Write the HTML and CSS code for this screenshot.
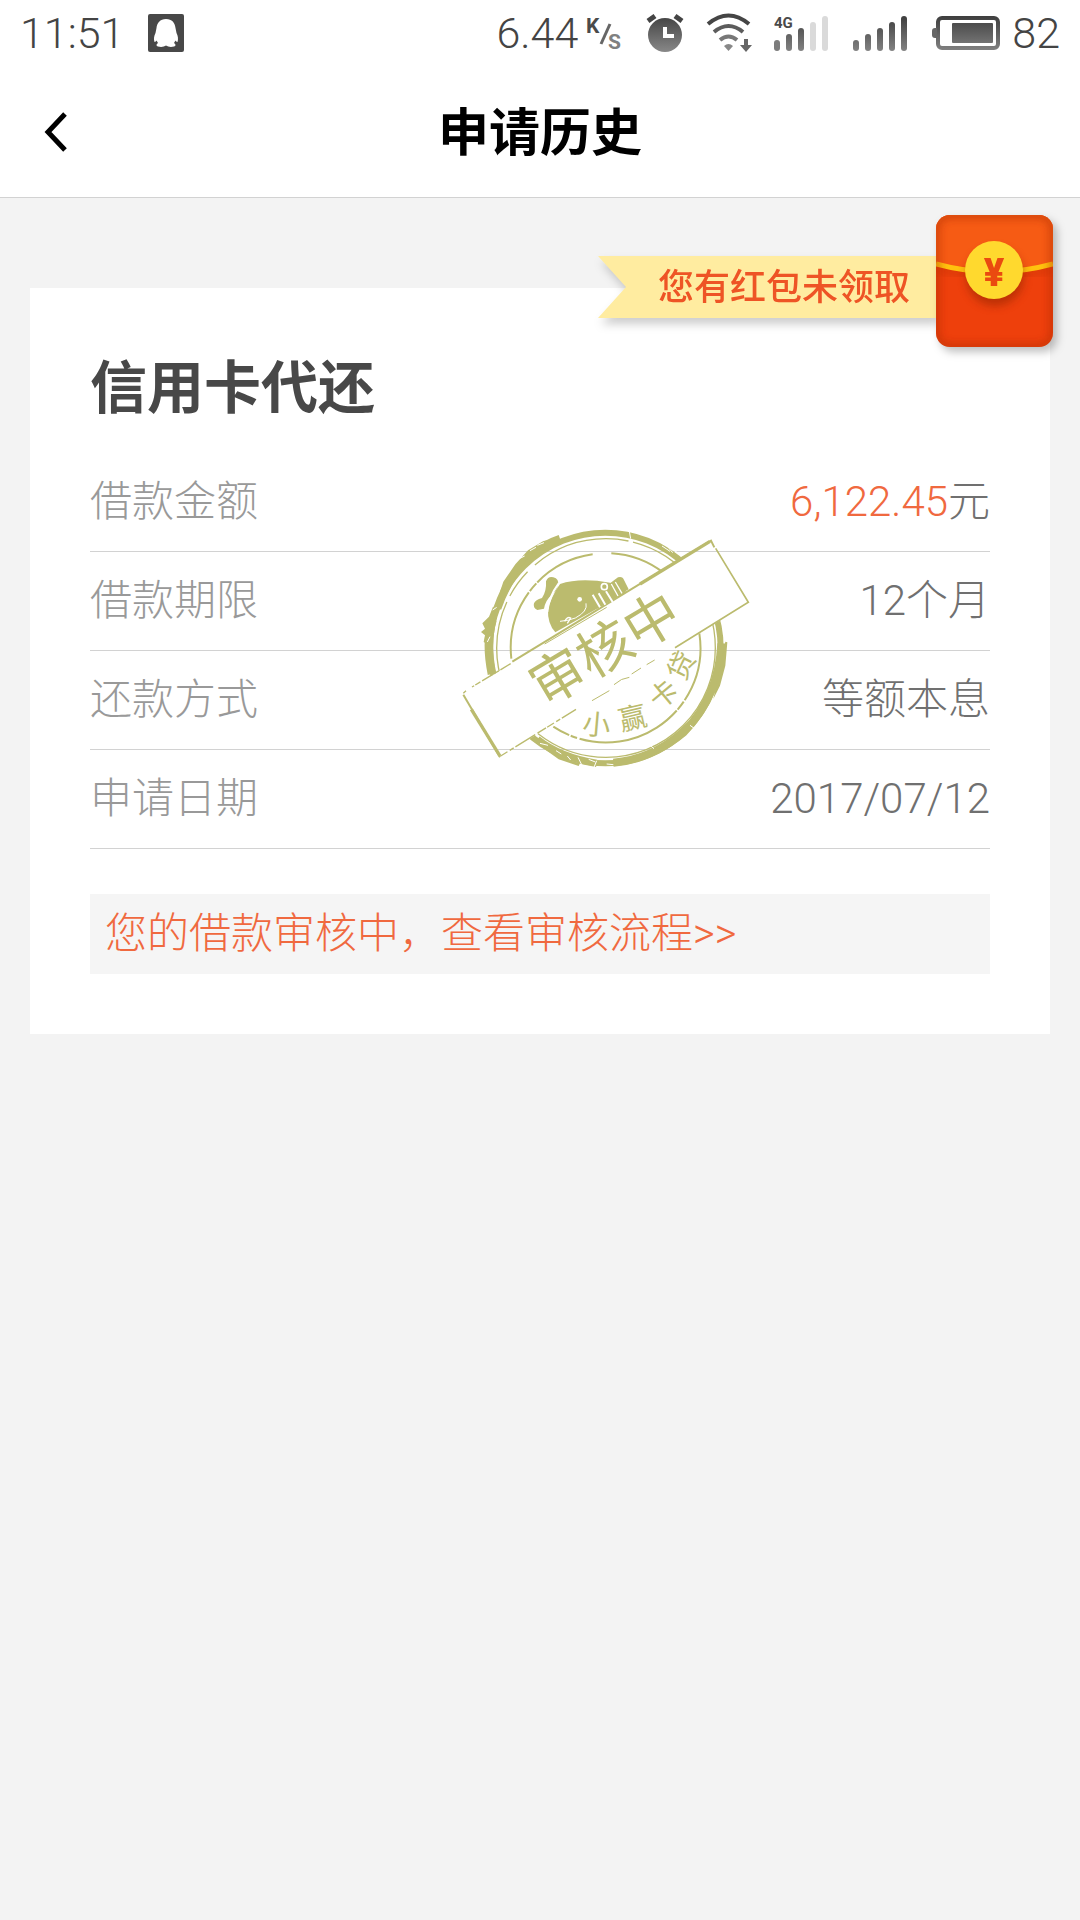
FILE: index.html
```html
<!DOCTYPE html>
<html lang="zh-CN">
<head>
    <meta charset="UTF-8">
    <meta name="viewport" content="width=device-width, initial-scale=1.0">
    <title>申请历史</title>
    <link rel="stylesheet" href="styles.css">
</head>
<body>
    <div class="status-bar">
        <div class="status-left">
            <span class="status-text">11:51</span>
            <svg class="icon" width="36" height="38" viewBox="0 0 36 38">
                <rect width="36" height="38" rx="2" fill="#484848"/>
                <path d="M18 5c-6 0-9 4-9.500 9l-1 5c-1.500 3-2 6-1 9 1 0 1.600-1 2-1.500l1.500 2.500c-2 1-2 3 0 3.600 3 .6 6 .4 8-1 2 1.400 5 1.600 8 1 2-.6 2-2.600 0-3.600l1.500-2.500c.4.5 1 1.500 2 1.500 1-3 .5-6-1-9l-1-5C27 9 24 5 18 5z" fill="#fff"/>
            </svg>
        </div>
        <div class="status-right">
            <span class="status-text">6.44</span>
            <svg class="icon speed" width="44" height="44" viewBox="0 0 44 44">
                <text x="0" y="22" font-size="21" fill="#4a4a4a">K</text>
                <path d="M24 13l-9 20" stroke="#666" stroke-width="3"/>
                <text x="22" y="38" font-size="21" fill="#808080">S</text>
            </svg>
            <svg class="icon alarm" width="38" height="40" viewBox="0 0 38 40">
                <defs>
                    <linearGradient id="shade" x1="0" y1="0" x2="0" y2="40" gradientUnits="userSpaceOnUse">
                        <stop offset="0" stop-color="#3c3c3c"/>
                        <stop offset="1" stop-color="#8a8a8a"/>
                    </linearGradient>
                </defs>
                <circle cx="19" cy="22" r="17" fill="url(#shade)"/>
                <path d="M2 8l7-5M36 8l-7-5" stroke="#444" stroke-width="5"/>
                <path d="M19 14v9h9" fill="none" stroke="#fff" stroke-width="4"/>
            </svg>
            <svg class="icon wifi" width="46" height="40" viewBox="0 0 46 40">
                <g fill="none" stroke-width="4">
                    <path d="M2 11q20.500-17 41 0" stroke="#454545"/>
                    <path d="M8 19q14.500-12 29 0" stroke="#5c5c5c"/>
                    <path d="M14 27q8.500-7 17 0" stroke="#777"/>
                </g>
                <path d="M18 33q4.500-4 9 0l-4.500 5z" fill="#888"/>
                <path d="M38 26h4v6h4l-6 7-6-7h4z" fill="#666"/>
            </svg>
            <svg class="icon signal-4g" width="55" height="36" viewBox="0 0 55 36">
                <text x="0" y="13" font-size="15" fill="#4a4a4a">4G</text>
                <rect x="0" y="25" width="6" height="11" rx="3" fill="#7c7c7c"/>
                <rect x="12" y="19" width="6" height="17" rx="3" fill="url(#shade)"/>
                <rect x="24" y="13" width="6" height="23" rx="3" fill="url(#shade)"/>
                <rect x="36" y="7" width="6" height="29" rx="3" fill="#dadada"/>
                <rect x="48" y="1" width="6" height="35" rx="3" fill="#dadada"/>
            </svg>
            <svg class="icon signal" width="55" height="36" viewBox="0 0 55 36">
                <g fill="url(#shade)">
                    <rect x="0" y="25" width="6" height="11" rx="3"/>
                    <rect x="12" y="19" width="6" height="17" rx="3"/>
                    <rect x="24" y="13" width="6" height="23" rx="3"/>
                    <rect x="36" y="7" width="6" height="29" rx="3"/>
                    <rect x="48" y="1" width="6" height="35" rx="3"/>
                </g>
            </svg>
            <svg class="icon battery" width="68" height="36" viewBox="0 0 68 36">
                <rect x="6" y="3" width="60" height="30" rx="4" fill="none" stroke="url(#shade)" stroke-width="4"/>
                <path d="M5 13H3q-3 0-3 3v4q0 3 3 3h2z" fill="#666"/>
                <rect x="20" y="8" width="41" height="20" rx="1" fill="url(#shade)"/>
            </svg>
            <span class="status-text">82</span>
        </div>
    </div>

    <header class="nav-bar">
        <button class="back" type="button" aria-label="返回">
            <svg width="24" height="42" viewBox="0 0 24 42">
                <path d="M21 3L4 21l17 18" fill="none" stroke="#000" stroke-width="5"/>
            </svg>
        </button>
        <h1>申请历史</h1>
    </header>

    <main class="content">
        <a class="red-packet" href="#">
            <span class="ribbon"><span class="ribbon-text">您有红包未领取</span></span>
            <svg class="envelope" width="117" height="132" viewBox="0 0 117 132">
                <defs>
                    <clipPath id="packet"><rect width="117" height="132" rx="14"/></clipPath>
                    <filter id="soft" x="-20%" y="-20%" width="140%" height="140%"><feGaussianBlur stdDeviation="4"/></filter>
                </defs>
                <g clip-path="url(#packet)">
                    <rect width="117" height="132" fill="#ee400c"/>
                    <path d="M0 0h117v48Q58 66 0 48z" fill="#f65b14"/>
                    <path d="M0 53Q58 68 117 53" fill="none" stroke="#a92a08" stroke-width="5" opacity=".4" filter="url(#soft)"/>
                    <path d="M0 49Q58 65 117 49" fill="none" stroke="#ffc20e" stroke-width="5"/>
                    <circle cx="59" cy="62" r="29" fill="#8c2200" opacity=".5" filter="url(#soft)"/>
                    <rect width="117" height="132" rx="14" fill="none" stroke="#a82a05" stroke-width="5" opacity=".7" filter="url(#soft)"/>
                </g>
                <circle cx="58" cy="55" r="29" fill="#ffd92e"/>
                <text class="yen" x="58" y="71" text-anchor="middle">¥</text>
            </svg>
        </a>

        <section class="card">
            <h2>信用卡代还</h2>
            <dl class="details">
                <div class="row">
                    <dt>借款金额</dt>
                    <dd><span class="amount">6,122.45</span>元</dd>
                </div>
                <div class="row">
                    <dt>借款期限</dt>
                    <dd>12个月</dd>
                </div>
                <div class="row">
                    <dt>还款方式</dt>
                    <dd>等额本息</dd>
                </div>
                <div class="row">
                    <dt>申请日期</dt>
                    <dd>2017/07/12</dd>
                </div>
            </dl>
            <a class="notice" href="#">您的借款审核中，查看审核流程&gt;&gt;</a>

            <svg class="stamp" width="310" height="270" viewBox="0 0 930 810">
                <defs>
                    <!-- everything except the banner -->
                    <clipPath id="outside">
                        <path d="M0 0H930L783 92 40 550 0 575zM0 835L150 742 897 277 930 257V835z"/>
                    </clipPath>
                </defs>
                <g clip-path="url(#outside)" fill="none" stroke="#bbbb6e">
                    <circle cx="466" cy="414" r="346" stroke-width="18"/>
                    <path d="M142 295Q200 130 330 86" stroke-width="24"/>
                    <path d="M127 330Q107 400 126 492" stroke-width="26"/>
                    <path d="M814 400Q806 560 700 668 600 750 490 758" stroke-width="24"/>
                    <path d="M262 688Q330 742 440 760" stroke-width="22"/>
                    <circle cx="468" cy="414" r="328" stroke-width="4" stroke-dasharray="900 12 260 20 90 30 300 14"/>
                    <path d="M184 446A284 284 0 0 1 428 133M484 130A284 284 0 0 1 640 188M748 370A284 284 0 0 1 310 650" stroke-width="6" stroke-dasharray="210 5 30 4 320 8 20 5"/>
                </g>
                <!-- worn edges -->
                <path d="M97 340l20-20 12-30 8 4-12 60 2 50-16 26 4-26-14-8 4-20-12-10 12-10zM150 245l10-30 36-52 38-42 46-28 36-6-30 18-42 28-36 44-24 46zM826 395l6 2-6 70-16 60-20 40zM740 612l-10 40-60 48-64 22 70-52zM260 682l20 24 36 20 40 24 34 10-4 8-60-20-50-36z" fill="#bbbb6e"/>
                <g stroke="#fff" fill="none" stroke-width="3">
                    <path d="M538 64l4 22M636 108l24 16M648 104l20 24M664 116l22 14M200 150l24-12M240 122l18-10M262 106l20-8M128 300l12-8M120 380l-8 16M318 722l16 10M352 738l10 12M384 742l10 20M416 748l20 8M440 752l-8 20M470 762l20 2M600 706l12 10M720 646l14 10M270 700l24 6"/>
                </g>
                <g fill="none" stroke="#bbbb6e">
                    <path d="M187 455L783 92l10 20" stroke-width="6"/>
                    <path d="M570 222L780 94" stroke-width="10"/>
                    <path d="M797 115L895 277 675 413" stroke-width="5"/>
                    <path d="M182 461L66 531M48 542l-8 8" stroke-width="4" stroke-dasharray="36 6 18 4"/>
                    <path d="M40 554L150 742" stroke-width="6"/>
                    <path d="M64 598L150 738" stroke-width="10"/>
                    <path d="M152 738L378 598" stroke-width="4" stroke-dasharray="24 8 14 6 70 8 30 4"/>
                    <path d="M284 402L470 292" stroke-width="3"/>
                    <path d="M492 524Q514 504 538 502M426 572L478 542M545 492l28-18M590 464l24-14" stroke-width="3"/>
                </g>
                <!-- mascot with cap and hand -->
                <path d="M288 214q6-16 22-12 18 4 14 24-2 16-20 30-18 16-22 40l-20 4q-14-6-10-20 4-10 24-16 14-20 12-50z" fill="#bbbb6e"/>
                <path d="M330 222Q390 202 480 218L530 246 316 367Q292 340 294 300q8-38 36-78z" fill="#bbbb6e"/>
                <path d="M426 254q20-24 30-16 6-20 24-18l24-18q14-4 18 8l14 28-94 58z" fill="#bbbb6e"/>
                <g fill="none" stroke="#fff" stroke-width="6">
                    <path d="M326 220q-30 40-34 86"/>
                    <path d="M428 254l22 38M446 250l20 34M468 244l20 32"/>
                    <path d="M484 222l20 36M496 216l20 34" stroke-width="4"/>
                    <circle cx="463" cy="230" r="9" stroke-width="5"/>
                    <path d="M408 280q6 24-32 44-20 8-46 10" stroke-width="3"/>
                    <path d="M344 334q8-16 18-10l-10 16" stroke-width="4"/>
                </g>
                <circle cx="389" cy="268" r="7" fill="#fff"/>
                <g class="stamp-text" fill="#bbbb6e" text-anchor="middle">
                    <text x="0" y="59" font-size="164" transform="translate(464 416) rotate(-31)">审核中</text>
                    <g font-size="84">
                        <text x="0" y="31" transform="translate(440 643) rotate(5)">小</text>
                        <text x="0" y="31" transform="translate(548 623) rotate(-13)">赢</text>
                        <text x="0" y="31" transform="translate(640 552) rotate(-40)">卡</text>
                        <text x="0" y="31" transform="translate(693 466) rotate(-64)">贷</text>
                    </g>
                </g>
            </svg>
        </section>
    </main>
</body>
</html>
```

FILE: styles.css
```css
* {
    box-sizing: border-box;
}
body {
    margin: 0;
    min-height: 100vh;
    background-color: #f3f3f3;
    font-family: Roboto, "Noto Sans CJK SC", sans-serif;
    font-weight: 300;
}
.status-bar {
    display: flex;
    justify-content: space-between;
    height: 66px;
    padding: 0 20px;
    background: #fff;
}
.status-left,
.status-right {
    display: flex;
    align-items: center;
}
.status-left {
    gap: 24px;
}
.status-text {
    font-size: 43px;
    line-height: 66px;
    color: #444;
}
.icon {
    display: block;
    font-family: Roboto, sans-serif;
    font-weight: 700;
}
.speed {
    margin-left: 8px;
}
.alarm {
    margin-left: 16px;
}
.wifi,
.signal-4g {
    margin-left: 22px;
}
.signal,
.battery {
    margin-left: 24px;
}
.battery {
    margin-right: 12px;
}
.nav-bar {
    display: flex;
    align-items: center;
    justify-content: center;
    position: relative;
    height: 132px;
    padding-top: 4px;
    background: #fff;
    border-bottom: 1px solid #d2d2d2;
}
.nav-bar h1 {
    margin: 0;
    font-size: 51px;
    line-height: 72px;
    font-weight: 700;
    color: #000;
}
.back {
    position: absolute;
    left: 32px;
    top: 33px;
    display: flex;
    padding: 12px;
    border: 0;
    background: none;
    cursor: pointer;
}
.content {
    position: relative;
    padding: 90px 30px 30px;
}
/* red packet reminder, lies over the card corner */
.red-packet {
    position: absolute;
    top: 17px;
    right: 27px;
    z-index: 1;
    display: flex;
    align-items: flex-start;
    text-decoration: none;
}
.ribbon {
    margin-top: 41px;
    filter: drop-shadow(3px 6px 5px rgba(0, 0, 0, 0.2));
}
.ribbon-text {
    display: block;
    padding: 2px 26px 0 60px;
    background: #ffeca0;
    clip-path: polygon(0 0, 100% 0, 100% 100%, 0 100%, 28px 50%);
    font-size: 36px;
    line-height: 60px;
    font-weight: 500;
    color: #ee5425;
}
.envelope {
    display: block;
    filter: drop-shadow(4px 5px 4px rgba(0, 0, 0, 0.25));
}
.yen {
    font-size: 38px;
    font-weight: 900;
    fill: #ea4a10;
}
.card {
    position: relative;
    padding: 60px;
    background: #fff;
}
.card h2 {
    margin: 0;
    font-size: 57px;
    line-height: 82px;
    font-weight: 700;
    color: #484848;
}
.details {
    margin: 23px 0 45px;
}
.row {
    display: flex;
    justify-content: space-between;
    height: 99px;
    border-bottom: 1px solid #d2d2d2;
    font-size: 42px;
    line-height: 98px;
}
.row dt {
    color: #999;
}
.row dd {
    margin: 0;
    color: #707070;
}
.amount {
    color: #f0693f;
}
.notice {
    display: block;
    padding: 0 15px;
    background: #f5f5f5;
    font-size: 42px;
    line-height: 80px;
    color: #f0693f;
    text-decoration: none;
}
.stamp {
    position: absolute;
    top: 222px;
    left: 420px;
}
.stamp-text {
    font-family: "Noto Sans CJK SC", sans-serif;
    font-weight: 400;
}
```
